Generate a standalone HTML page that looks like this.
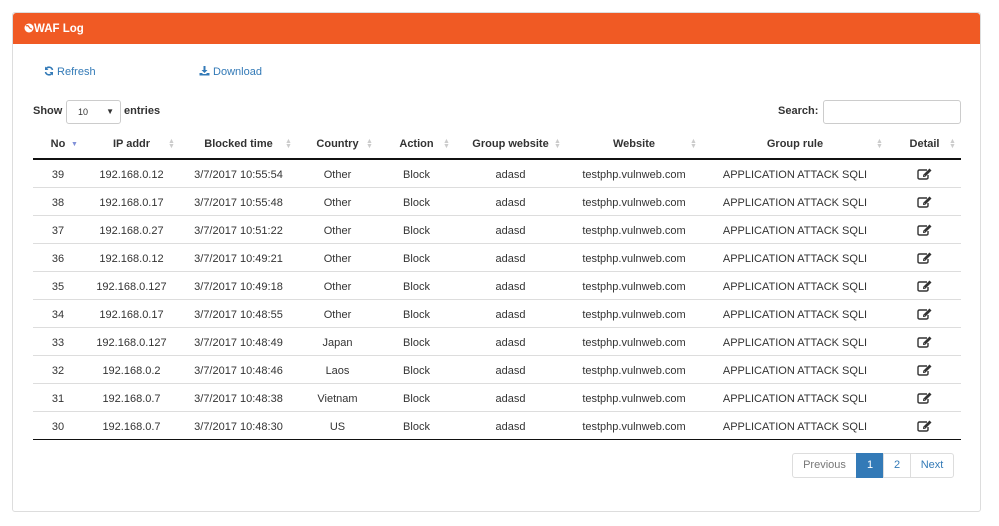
<!DOCTYPE html>
<html><head><style>
body{margin:0;width:999px;height:526px;background:#fff;font-family:"Liberation Sans",Arial,sans-serif;font-size:11px;color:#333;position:relative;overflow:hidden}
.panel{position:absolute;left:12px;top:12px;width:967px;height:498px;border:1px solid #ddd;border-radius:3px}
.hd{position:absolute;left:0;top:0;width:967px;height:31px;background:#f05a24;color:#fff;font-weight:bold;font-size:11.5px;line-height:31px;border-radius:3px 3px 0 0}
.hd span{position:absolute;left:11px;top:1px}
a{color:#337ab7;text-decoration:none}
.abs{position:absolute}
table{position:absolute;left:33px;top:130px;border-collapse:collapse;table-layout:fixed;width:928px}
th{height:28px;font-weight:bold;text-align:center;position:relative;border-bottom:2px solid #111;padding:0}
th i{position:absolute;right:6px;top:9px;width:6px;height:10px;color:#ccc;font-style:normal;font-size:7px;line-height:5px}
td{height:24px;text-align:center;border-top:1px solid #ddd;padding:3px 0 0;vertical-align:middle;line-height:13px}
tr:last-child td{border-bottom:1px solid #111}
.pg{position:absolute;top:453px;height:23px;border:1px solid #ddd;line-height:23px;text-align:center;color:#337ab7;font-size:11px}
td svg{display:block;margin:-3px auto 0}
</style></head><body>
<div class="panel"><div class="hd"><span><svg width="10" height="10" viewBox="0 0 10 10" style="vertical-align:-1px"><circle cx="5" cy="5" r="4.5" fill="#fff"/><path d="M2 3Q4 2 5 4T8 6" stroke="#f05a24" stroke-width="1.2" fill="none"/></svg>WAF Log</span></div></div>
<a class="abs" style="left:44px;top:66px"><svg width="10" height="10" viewBox="0 0 10 10" style="vertical-align:-1px"><path d="M8.5 4A3.6 3.6 0 0 0 2 2.8M1.5 6A3.6 3.6 0 0 0 8 7.2" stroke="#337ab7" stroke-width="1.6" fill="none"/><path d="M1 0.5V4H4.5ZM9 9.5V6H5.5Z" fill="#337ab7"/></svg> Refresh</a>
<a class="abs" style="left:199px;top:66px"><svg width="11" height="10" viewBox="0 0 11 10" style="vertical-align:-1px"><path d="M4.5 0H6.5V4H8.5L5.5 7 2.5 4H4.5Z" fill="#337ab7"/><path d="M0.5 7V9.5H10.5V7H8L7 8H4L3 7Z" fill="#337ab7"/></svg> Download</a>
<div class="abs" style="left:33px;top:105px;font-weight:bold">Show</div>
<div class="abs" style="left:66px;top:100px;width:53px;height:22px;border:1px solid #ccc;border-radius:3px;font-size:9px;line-height:22px"><span style="position:absolute;left:11px">10</span><span style="position:absolute;right:6px;font-size:8px">&#9660;</span></div>
<div class="abs" style="left:124px;top:105px;font-weight:bold">entries</div>
<div class="abs" style="left:778px;top:105px;font-weight:bold">Search:</div>
<div class="abs" style="left:823px;top:100px;width:136px;height:22px;border:1px solid #ccc;border-radius:3px"></div>
<table>
<colgroup><col style="width:50px"><col style="width:97px"><col style="width:117px"><col style="width:81px"><col style="width:77px"><col style="width:111px"><col style="width:136px"><col style="width:186px"><col style="width:73px"></colgroup>
<tr><th>No<i style="color:#8090d8;top:12px">&#9660;</i></th><th>IP addr<i>&#9650;<br>&#9660;</i></th><th>Blocked time<i>&#9650;<br>&#9660;</i></th><th>Country<i>&#9650;<br>&#9660;</i></th><th>Action<i>&#9650;<br>&#9660;</i></th><th>Group website<i>&#9650;<br>&#9660;</i></th><th>Website<i>&#9650;<br>&#9660;</i></th><th>Group rule<i>&#9650;<br>&#9660;</i></th><th>Detail<i>&#9650;<br>&#9660;</i></th></tr>
<tr><td>39</td><td>192.168.0.12</td><td>3/7/2017 10:55:54</td><td>Other</td><td>Block</td><td>adasd</td><td>testphp.vulnweb.com</td><td>APPLICATION ATTACK SQLI</td><td>E</td></tr>
<tr><td>38</td><td>192.168.0.17</td><td>3/7/2017 10:55:48</td><td>Other</td><td>Block</td><td>adasd</td><td>testphp.vulnweb.com</td><td>APPLICATION ATTACK SQLI</td><td>E</td></tr>
<tr><td>37</td><td>192.168.0.27</td><td>3/7/2017 10:51:22</td><td>Other</td><td>Block</td><td>adasd</td><td>testphp.vulnweb.com</td><td>APPLICATION ATTACK SQLI</td><td>E</td></tr>
<tr><td>36</td><td>192.168.0.12</td><td>3/7/2017 10:49:21</td><td>Other</td><td>Block</td><td>adasd</td><td>testphp.vulnweb.com</td><td>APPLICATION ATTACK SQLI</td><td>E</td></tr>
<tr><td>35</td><td>192.168.0.127</td><td>3/7/2017 10:49:18</td><td>Other</td><td>Block</td><td>adasd</td><td>testphp.vulnweb.com</td><td>APPLICATION ATTACK SQLI</td><td>E</td></tr>
<tr><td>34</td><td>192.168.0.17</td><td>3/7/2017 10:48:55</td><td>Other</td><td>Block</td><td>adasd</td><td>testphp.vulnweb.com</td><td>APPLICATION ATTACK SQLI</td><td>E</td></tr>
<tr><td>33</td><td>192.168.0.127</td><td>3/7/2017 10:48:49</td><td>Japan</td><td>Block</td><td>adasd</td><td>testphp.vulnweb.com</td><td>APPLICATION ATTACK SQLI</td><td>E</td></tr>
<tr><td>32</td><td>192.168.0.2</td><td>3/7/2017 10:48:46</td><td>Laos</td><td>Block</td><td>adasd</td><td>testphp.vulnweb.com</td><td>APPLICATION ATTACK SQLI</td><td>E</td></tr>
<tr><td>31</td><td>192.168.0.7</td><td>3/7/2017 10:48:38</td><td>Vietnam</td><td>Block</td><td>adasd</td><td>testphp.vulnweb.com</td><td>APPLICATION ATTACK SQLI</td><td>E</td></tr>
<tr><td>30</td><td>192.168.0.7</td><td>3/7/2017 10:48:30</td><td>US</td><td>Block</td><td>adasd</td><td>testphp.vulnweb.com</td><td>APPLICATION ATTACK SQLI</td><td>E</td></tr>
</table>
<div class="pg" style="left:792px;width:63px;color:#777;border-radius:3px 0 0 3px">Previous</div>
<div class="pg" style="left:856px;width:26px;background:#337ab7;border-color:#337ab7;color:#fff">1</div>
<div class="pg" style="left:883px;width:26px">2</div>
<div class="pg" style="left:910px;width:42px;border-radius:0 3px 3px 0">Next</div>
<script>
var s='<svg width="15" height="12" viewBox="0 0 15 12"><path d="M10 2H2.5Q1 2 1 3.5V9.5Q1 11 2.5 11H9.5Q11 11 11 9.5V7" stroke="#333" stroke-width="1.4" fill="none"/><path d="M12.5 0.5L14.5 2.5 8 9H6V7Z" fill="#333"/><path d="M6.8 8.2L7.5 7.5" stroke="#fff" stroke-width="0.8"/></svg>';
document.querySelectorAll('td:last-child').forEach(function(t){t.innerHTML=s});
</script>
</body></html>
